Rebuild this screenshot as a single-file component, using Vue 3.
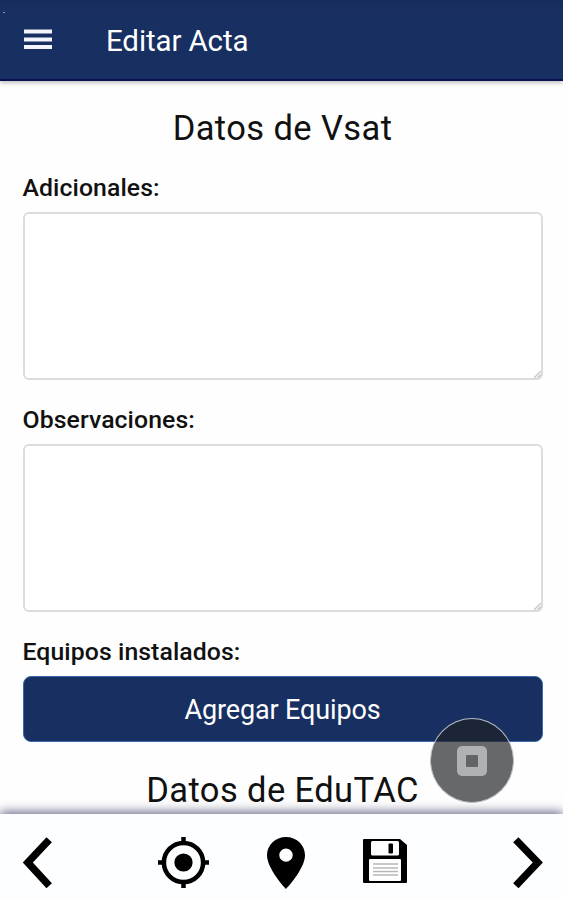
<script setup>
const fields = [
  { id: 'adicionales', label: 'Adicionales:' },
  { id: 'observaciones', label: 'Observaciones:' },
]
</script>

<template>
  <div class="screen">
    <header class="topbar">
      <span class="speck"></span>
      <svg class="menu" width="28" height="21" viewBox="0 0 28 21">
        <path d="M0 2.5h28M0 10.5h28M0 18h28" stroke="#f4f4fc" stroke-width="3.8" />
      </svg>
      <h1 class="title">Editar Acta</h1>
    </header>

    <main class="content">
      <h2 class="section vsat">Datos de Vsat</h2>
      <div v-for="f in fields" :key="f.id" class="field">
        <label :class="['label', f.id]" :for="f.id">{{ f.label }}</label>
        <div :id="f.id" class="area">
          <svg class="grip" width="7" height="7" viewBox="0 0 7 7">
            <path d="M0 7L7 0M3.5 7L7 3.5" stroke="#c8c8c8" stroke-width="1.5" />
          </svg>
        </div>
      </div>
      <div class="label equipos">Equipos instalados:</div>
      <button class="add"><span>Agregar Equipos</span></button>
      <h2 class="section edutac">Datos de EduTAC</h2>
    </main>

    <div class="floating">
      <svg width="30" height="30" viewBox="0 0 30 30">
        <rect width="30" height="30" rx="5" fill="#b0b1b3" />
        <rect x="9" y="9" width="12" height="12" rx="1" fill="#626467" />
      </svg>
    </div>

    <footer class="bottombar">
      <svg class="back" width="29" height="52" viewBox="0 0 29 52">
        <path d="M26.2 2.7L4.8 25.5L26.2 48.8" fill="none" stroke="#000" stroke-width="7.4" />
      </svg>
      <svg class="target" width="51" height="51" viewBox="0 0 52 52">
        <circle cx="26" cy="26" r="20" fill="none" stroke="#000" stroke-width="4.6" />
        <circle cx="26" cy="26" r="9.3" />
        <path d="M26 0v7M26 45v7M0 26h7M45 26h7" stroke="#000" stroke-width="4.6" />
      </svg>
      <svg class="pin" width="38" height="52" viewBox="0 0 38 53" preserveAspectRatio="none">
        <path fill-rule="evenodd" d="M19 0C8.5 0 0 8.2 0 18.6C0 32.5 19 53 19 53S38 32.5 38 18.6C38 8.2 29.5 0 19 0ZM19 11.8a6.7 6.7 0 1 1 0 13.4a6.7 6.7 0 0 1 0-13.4Z" />
      </svg>
      <svg class="save" width="44" height="44" viewBox="0 0 44 44">
        <path d="M1 0H37L44 6V43Q44 44 43 44H1Q0 44 0 43V1Q0 0 1 0Z" />
        <rect x="8" y="2" width="28" height="14.5" rx="1.5" fill="#fff" />
        <rect x="25.5" y="4.5" width="4.5" height="10" rx="1" />
        <rect x="6" y="20" width="32" height="22" rx="1" fill="#fff" />
        <path d="M10 25h25M10 29h25M10 32.5h25M10 36h25" stroke="#b8b8b8" stroke-width="1.3" />
      </svg>
      <svg class="next" width="30" height="52" viewBox="0 0 30 52">
        <path d="M2.8 2.7L24.8 25.5L2.8 48.8" fill="none" stroke="#000" stroke-width="7.4" />
      </svg>
    </footer>
  </div>
</template>

<style>
body {
  margin: 0;
  overflow: hidden;
}
</style>

<style scoped>
.screen {
  position: relative;
  display: flex;
  flex-direction: column;
  width: 563px;
  height: 900px;
  overflow: hidden;
  background: #fefefe;
  color: #111;
  font-family: Roboto, "Liberation Sans", sans-serif;
}
.topbar {
  position: relative;
  z-index: 1;
  display: flex;
  flex: none;
  box-sizing: border-box;
  height: 81px;
  padding-left: 23.5px;
  background: linear-gradient(#162c59, #182f61 12px);
  border-bottom: 2px solid #090f50;
  box-shadow: 0 2px 4px rgba(40, 45, 40, 0.3);
}
.speck {
  position: absolute;
  left: 3px;
  top: 12px;
  width: 2px;
  height: 1px;
  background: #8495b4;
}
.menu {
  margin-top: 29px;
}
.title {
  margin: 23px 0 0 54.5px;
  font-size: 29.5px;
  font-weight: 400;
  line-height: 36px;
  letter-spacing: -0.12px;
  color: #fff;
  white-space: nowrap;
}
.content {
  flex: none;
  box-sizing: border-box;
  height: 733px;
  padding: 0 20.5px 0 22.5px;
  overflow: hidden;
}
.section {
  margin: 0;
  height: 42px;
  font-size: 34.5px;
  line-height: 42px;
  font-weight: 400;
  letter-spacing: 0.4px;
  text-align: center;
  white-space: nowrap;
}
.vsat {
  margin-top: 26px;
}
.label {
  display: block;
  height: 30px;
  font-size: 24.8px;
  font-weight: 500;
  line-height: 30px;
  letter-spacing: 0.08px;
  white-space: nowrap;
}
.field {
  height: 232px;
}
.vsat + .field {
  margin-top: 24px;
}
.area {
  position: relative;
  box-sizing: border-box;
  height: 168px;
  margin-top: 9px;
  background: #fff;
  border: 2px solid #dcdcdc;
  border-radius: 6px;
}
.grip {
  position: absolute;
  right: 0;
  bottom: 0;
}
.add {
  display: block;
  box-sizing: border-box;
  width: 100%;
  height: 66px;
  margin: 9px 0 0;
  padding: 2px 0 0;
  background: #182f61;
  border: 1px solid #3c6ca8;
  border-radius: 8px;
  color: #fff;
  font: 400 27px/62px Roboto, "Liberation Sans", sans-serif;
  letter-spacing: -0.13px;
}
.edutac {
  margin-top: 27px;
}
.floating {
  position: absolute;
  z-index: 3;
  left: 430px;
  top: 718px;
  display: flex;
  align-items: center;
  justify-content: center;
  box-sizing: border-box;
  width: 84px;
  height: 85px;
  border: 1px solid #b9bdc4;
  border-radius: 50%;
  background: rgba(30, 32, 35, 0.68);
}
.bottombar {
  position: relative;
  z-index: 2;
  display: flex;
  flex: none;
  align-items: flex-start;
  height: 86px;
  background: #fdfeff;
  box-shadow: 0 -2px 10px rgba(35, 38, 85, 0.7);
}
.back {
  margin: 23px 0 0 23px;
}
.target {
  margin: 23px 0 0 106px;
}
.pin {
  margin: 23px 0 0 58px;
}
.save {
  margin: 25px 0 0 58px;
}
.next {
  margin: 23px 0 0 106px;
}
</style>
